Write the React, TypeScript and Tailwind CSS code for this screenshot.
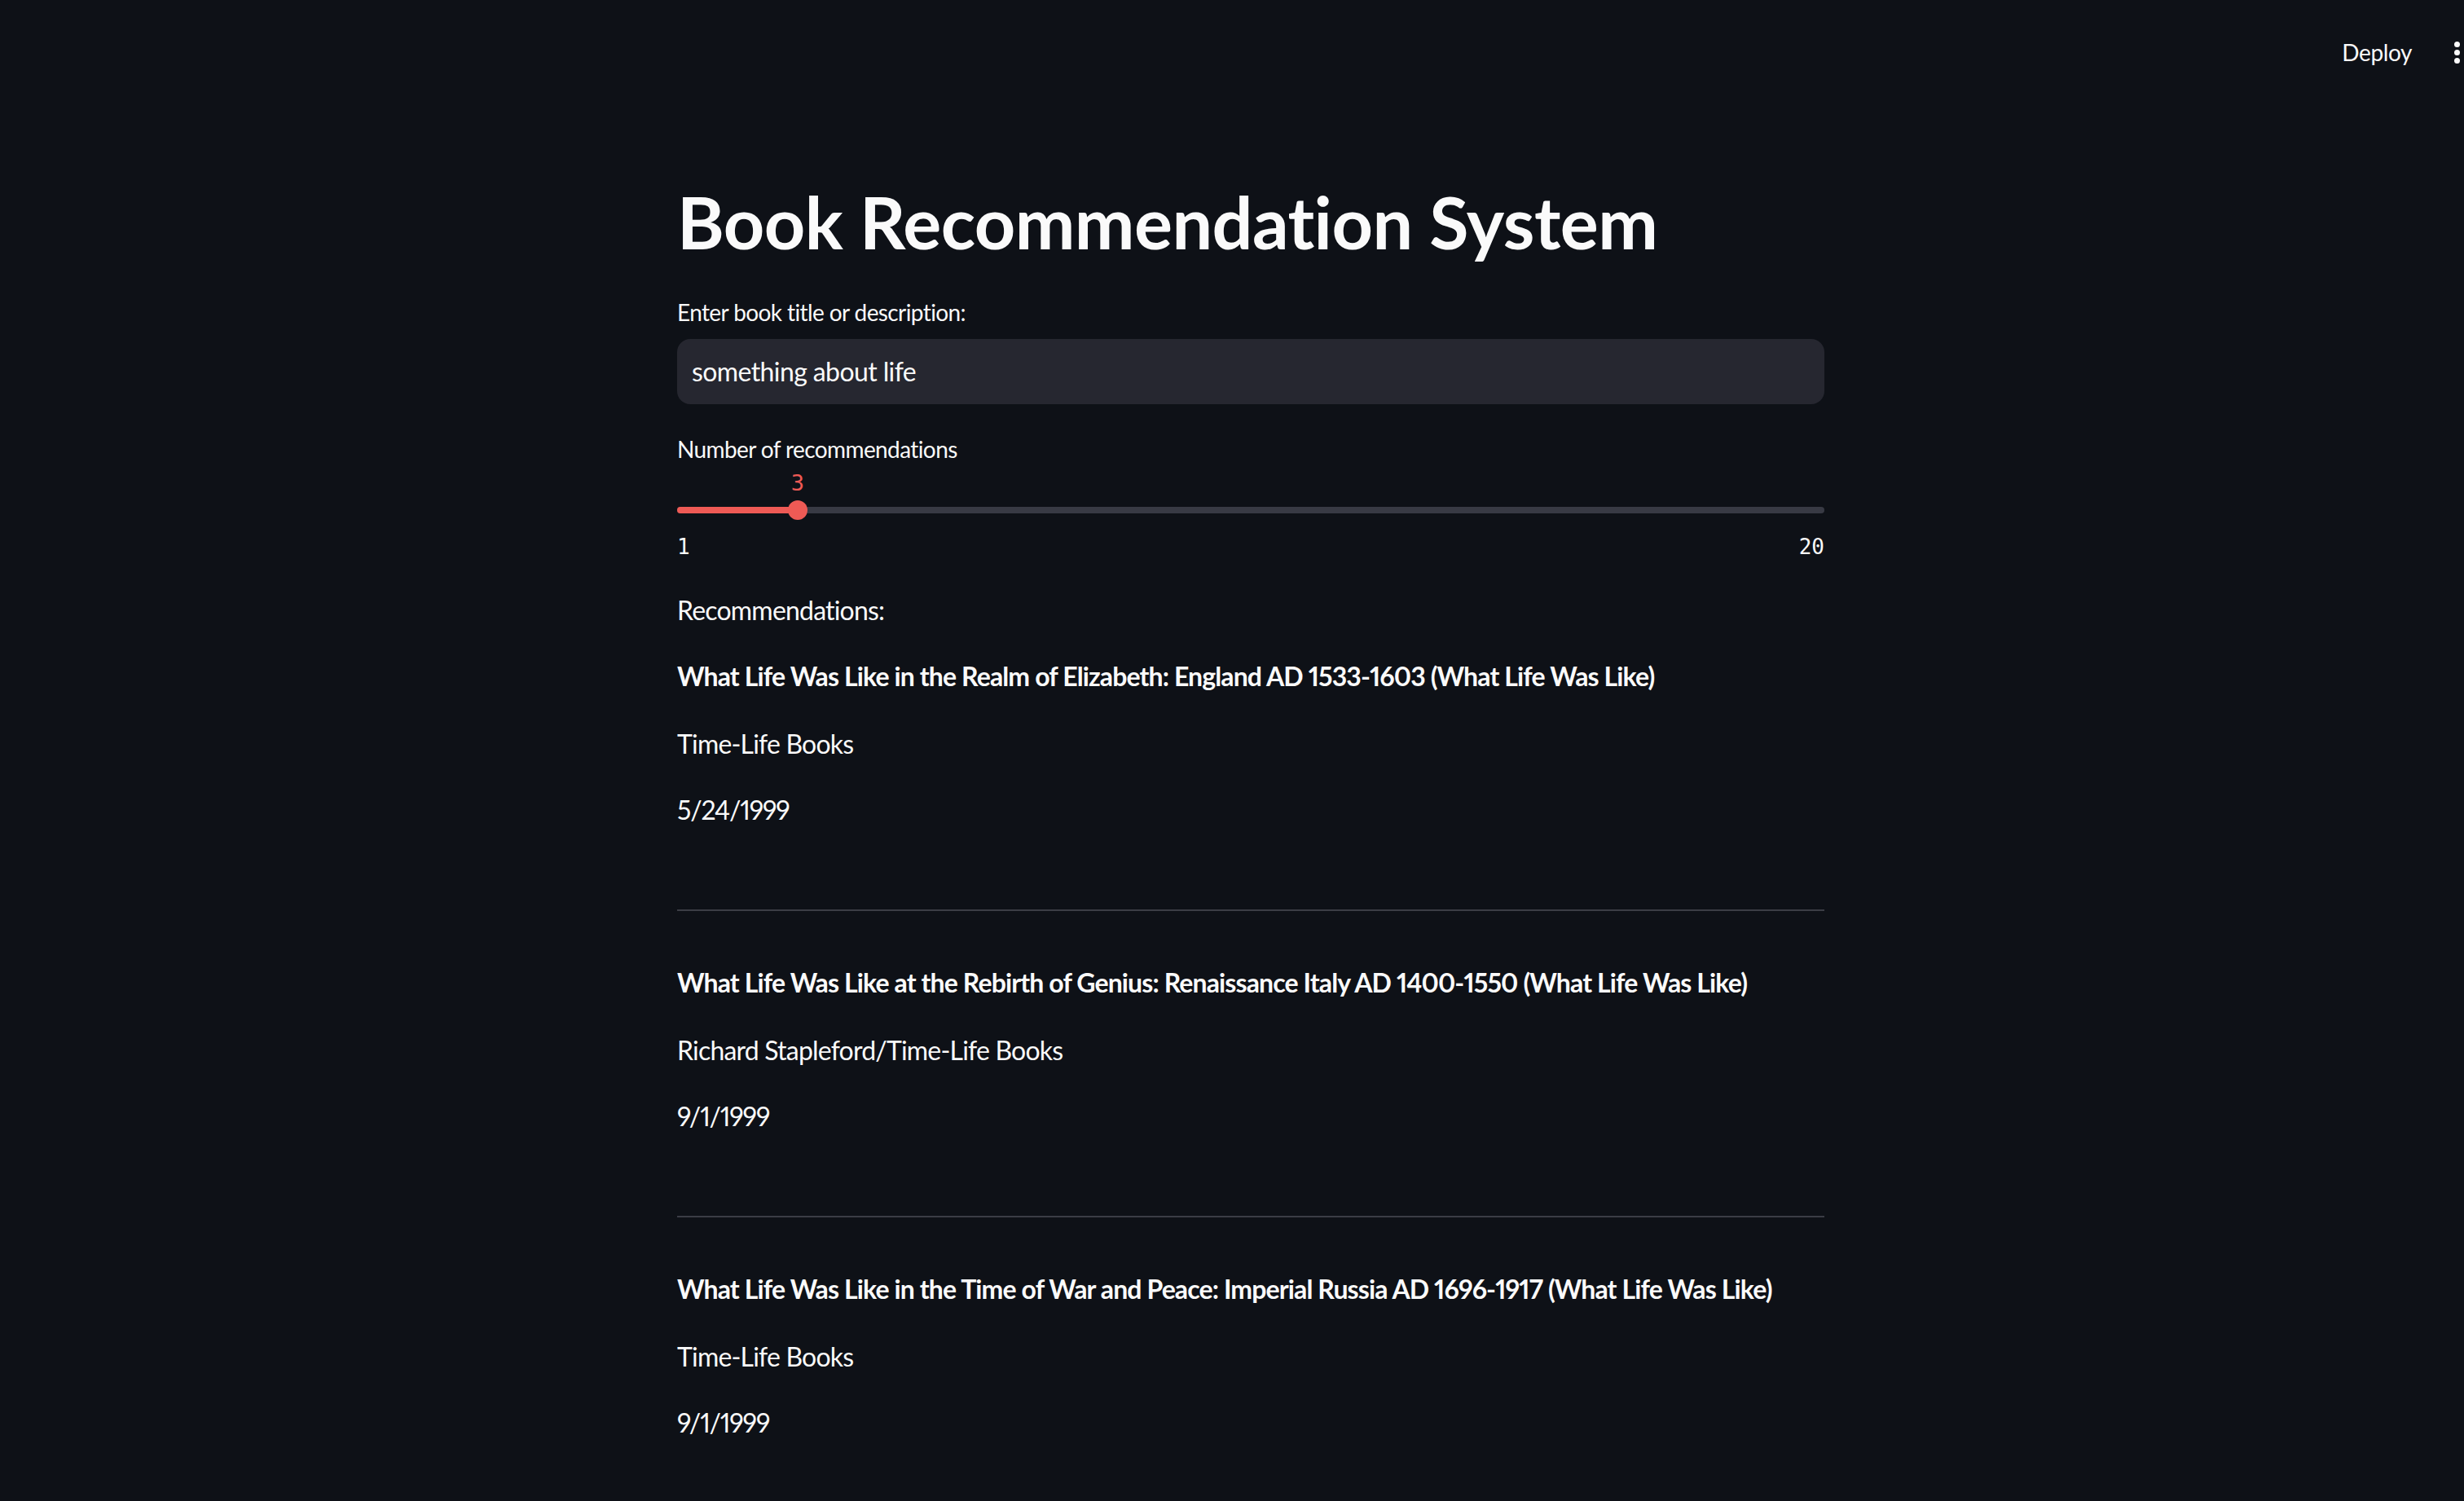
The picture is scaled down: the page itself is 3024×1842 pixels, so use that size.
import React from "react";

const books = [
  {
    title: "What Life Was Like in the Realm of Elizabeth: England AD 1533-1603 (What Life Was Like)",
    author: "Time-Life Books",
    date: "5/24/1999",
  },
  {
    title: "What Life Was Like at the Rebirth of Genius: Renaissance Italy AD 1400-1550 (What Life Was Like)",
    author: "Richard Stapleford/Time-Life Books",
    date: "9/1/1999",
  },
  {
    title: "What Life Was Like in the Time of War and Peace: Imperial Russia AD 1696-1917 (What Life Was Like)",
    author: "Time-Life Books",
    date: "9/1/1999",
  },
];

export default function App() {
  return (
    <div className="min-h-[1842px] w-full bg-[#0e1117] text-[#fafafa] font-[Lato,sans-serif]">
      {/* header */}
      <div className="flex h-[120px] items-start justify-end">
        <div className="mt-[44px] flex items-center">
          <span className="text-[28px] leading-[40px] tracking-[-0.4px]">Deploy</span>
          <div className="ml-[52px] mr-[5px] flex flex-col gap-[3px]">
            <span className="block h-[7px] w-[7px] rounded-full bg-[#fafafa]" />
            <span className="block h-[7px] w-[7px] rounded-full bg-[#fafafa]" />
            <span className="block h-[7px] w-[7px] rounded-full bg-[#fafafa]" />
          </div>
        </div>
      </div>

      <div className="ml-[831px] w-[1408px] pt-[99px] pb-[60px]">
        <h1 className="h-[106px] text-[88px] font-bold leading-[106px] tracking-[-0.55px]">
          Book Recommendation System
        </h1>

        <div className="mt-[38px] h-[40px] text-[28px] leading-[40px] tracking-[-0.6px]">
          Enter book title or description:
        </div>
        <div className="mt-[13px] flex h-[80px] items-center rounded-[16px] bg-[#262730] px-[18px]">
          <span className="text-[32px] tracking-[-0.6px]">something about life</span>
        </div>

        <div className="mt-[35px] h-[40px] text-[28px] leading-[40px] tracking-[-0.6px]">
          Number of recommendations
        </div>

        {/* slider */}
        <div className="relative mt-[2px] h-[120px]">
          <div className="absolute left-[136px] top-[0px] w-[24px] text-center font-['DejaVu_Sans_Mono',monospace] text-[27px] leading-[40px] text-[#ee5a55]">
            3
          </div>
          <div className="absolute left-0 right-0 top-[49px] h-[8px] rounded-full bg-[#383a44]" />
          <div className="absolute left-0 top-[49px] h-[8px] w-[150px] rounded-full bg-[#ee5a55]" />
          <div className="absolute left-[136px] top-[41px] h-[24px] w-[24px] rounded-full bg-[#ee5a55]" />
          <div className="absolute left-0 right-0 top-[78px] flex justify-between font-['DejaVu_Sans_Mono',monospace] text-[26px] leading-[40px]">
            <span>1</span>
            <span>20</span>
          </div>
        </div>

        <p className="mt-[30px] h-[52px] text-[32px] leading-[52px] tracking-[-0.8px]">Recommendations:</p>

        {books.map((b, i) => (
          <div key={i} className={i === 0 ? "mt-[29px]" : "mt-[62px]"}>
            <p className="h-[52px] whitespace-nowrap text-[32px] font-bold leading-[52px] tracking-[-0.88px] proportional-nums">{b.title}</p>
            <p className="mt-[31px] h-[52px] text-[32px] leading-[52px] tracking-[-0.8px]">{b.author}</p>
            <p className="mt-[29px] h-[52px] text-[32px] leading-[52px] tracking-[-1.2px] proportional-nums">{b.date}</p>
            {i < books.length - 1 && <hr className="mt-[96px] border-0 border-t-[2px] border-[#3b3d45]" />}
          </div>
        ))}
      </div>
    </div>
  );
}
